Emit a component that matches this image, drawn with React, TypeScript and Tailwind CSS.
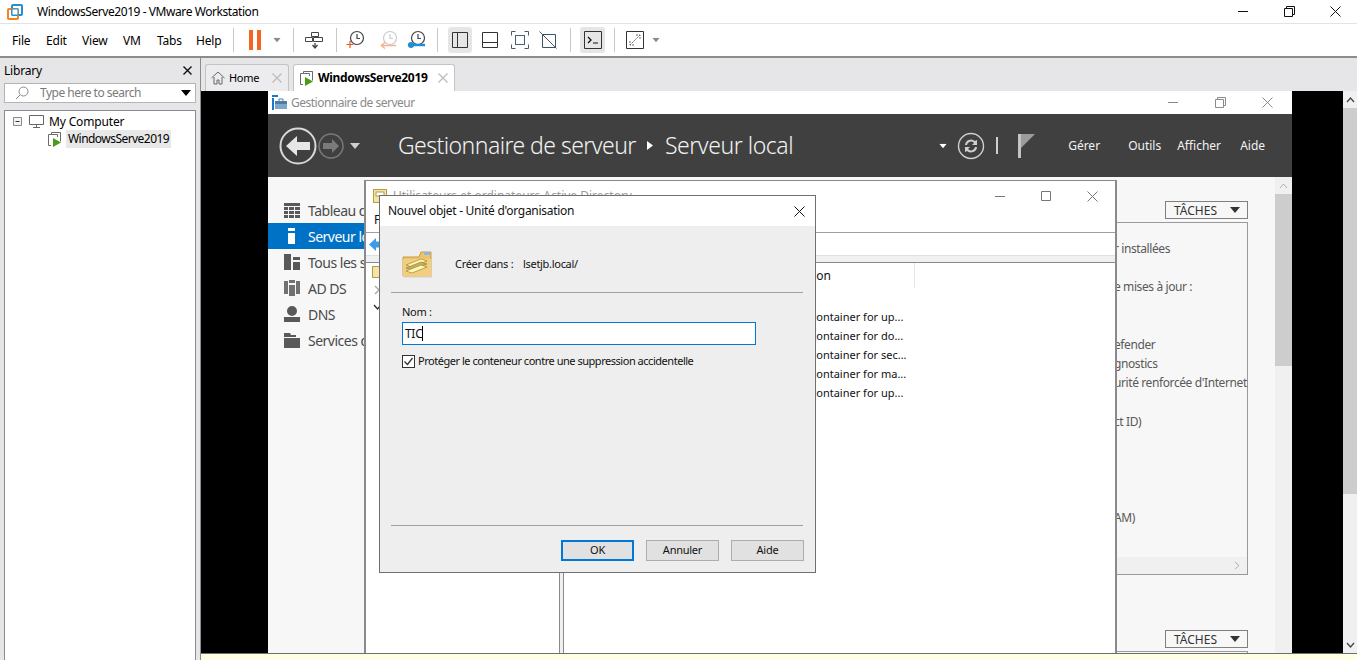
import React from "react";

const MENUS: [string, string][] = [
  ["File", "w-[34px]"],
  ["Edit", "w-[36px]"],
  ["View", "w-[41px]"],
  ["VM", "w-[34px]"],
  ["Tabs", "w-[39px]"],
  ["Help", "w-[37px]"],
];

const NAV = ["Tableau de bord", "Serveur local", "Tous les serveurs", "AD DS", "DNS", "Services de fichiers"];

const SIDE_ROWS: [number, string][] = [
  [0, "r installées"],
  [2, "e mises à jour :"],
  [5, "efender"],
  [6, "gnostics"],
  [7, "urité renforcée d'Internet"],
  [9, "ct ID)"],
  [14, "AM)"],
];

const CONTAINER_ROWS = ["container for up...", "container for do...", "container for sec...", "container for ma...", "container for up..."];

function Sep() {
  return <div className="w-px h-[24px] bg-[#c8c8c8]" />;
}

function Caret({ className }: { className: string }) {
  return (
    <svg width="10" height="6" viewBox="0 0 10 6" className={className}>
      <path d="M0 0h10L5 6z" fill="currentColor" />
    </svg>
  );
}

function VmwareLogo() {
  return (
    <svg width="16" height="16" viewBox="0 0 16 16">
      <rect x="5" y="1" width="10" height="10" rx="1" fill="none" stroke="#1f8fd6" strokeWidth="2" />
      <rect x="1" y="5" width="10" height="10" rx="1" fill="none" stroke="#f58220" strokeWidth="2" />
      <rect x="5" y="5" width="6" height="6" fill="#fff" stroke="#1f8fd6" strokeWidth="1" />
    </svg>
  );
}

function VmRunningIcon() {
  return (
    <svg width="15" height="15" viewBox="0 0 15 15" className="shrink-0">
      <path d="M3.500 2.500V.5h9v2M.5 2.500h9v11h-9z" fill="none" stroke="#6b6b6b" />
      <path d="M12.500 .5v9" stroke="#6b6b6b" />
      <rect x="3" y="5" width="7" height="9" fill="#fff" />
      <path d="M5 6l8 4.500L5 15z" fill="#4c9a17" />
    </svg>
  );
}

function ClockIcon({ color = "#444", children }: { color?: string; children?: React.ReactNode }) {
  return (
    <svg width="20" height="20" viewBox="0 0 20 20">
      <circle cx="11" cy="8" r="6.500" fill="none" stroke={color} strokeWidth="1.2" />
      <path d="M11 4v4.500h3" fill="none" stroke={color} strokeWidth="1.2" />
      {children}
    </svg>
  );
}

function FolderIcon() {
  return (
    <svg width="30" height="28" viewBox="0 0 30 28" className="shrink-0">
      <path d="M1 7h16l2-5h10v24H1z" fill="#eec36a" stroke="#c79c45" />
      <path d="M1 9h28v17H1z" fill="#f2cf7f" />
      <rect x="22" y="2" width="6" height="3" fill="#8fb4e8" />
      <path d="M4 15l15-6 6 2-15 6z" fill="#fdf6bd" stroke="#9d8430" strokeWidth=".7" />
      <path d="M4 18l15-6 6 2-15 6z" fill="#c9b24e" stroke="#9d8430" strokeWidth=".7" />
      <path d="M4 21l15-6 6 2-15 6z" fill="#fdf6bd" stroke="#9d8430" strokeWidth=".7" />
      <path d="M2 27h28V9" fill="none" stroke="#d8d2c0" />
    </svg>
  );
}

function NavIcon({ index, active }: { index: number; active: boolean }) {
  const c = active ? "#fff" : "#595959";
  const icons = [
    <path key="0" d="M0 1h16v3H0zM0 5h4v3H0zM5 5h5v3H5zM11 5h5v3h-5zM0 9h4v3H0zM5 9h5v3H5zM11 9h5v3h-5zM0 13h4v3H0zM5 13h5v3H5zM11 13h5v3h-5z" fill={c} />,
    <path key="1" d="M4 0h7v3H4zM4 5h7v11H4z" fill={c} />,
    <path key="2" d="M0 0h7v16H0zM9 3h7v3H9zM9 8h7v8H9z" fill={c} />,
    <path key="3" d="M0 1h4v13H0zM12 1h4v13h-4zM5 0h6v3H5zM5 5h6v11H5z" fill={c} opacity=".85" />,
    <path key="4" d="M8 0a5 5 0 110 10A5 5 0 018 0zM0 11h16v5H0z" fill={c} />,
    <path key="5" d="M0 1h6l1 2h5v2H0zM0 6h16v10H0z" fill={c} />,
  ];
  return (
    <svg width="16" height="16" viewBox="0 0 16 16" className="shrink-0">
      {icons[index]}
    </svg>
  );
}

function WinControls({ color, restore }: { color: string; restore: boolean }) {
  return (
    <>
      <svg width="11" height="11" viewBox="0 0 11 11">
        <path d="M0 5.500h10" stroke={color} />
      </svg>
      <svg width="11" height="11" viewBox="0 0 11 11">
        {restore ? (
          <path d="M.5 2.500h8v8h-8zM2.500 2.500v-2h8v8h-2" fill="none" stroke={color} />
        ) : (
          <path d="M.5.5h9v9h-9z" fill="none" stroke={color} />
        )}
      </svg>
      <svg width="11" height="11" viewBox="0 0 11 11">
        <path d="M.5.5l10 10M10.500.5l-10 10" stroke={color} />
      </svg>
    </>
  );
}

function TachesButton() {
  return (
    <div className="w-[83px] h-[18px] border border-[#7f7f7f] flex items-center pl-[8px] pr-[7px] justify-between text-[12px] text-[#333] bg-[#f7f7f7]">
      <span className="pt-[1px]">TÂCHES</span>
      <Caret className="text-[#333]" />
    </div>
  );
}

function DialogButton({ label, primary }: { label: string; primary?: boolean }) {
  return (
    <div
      className={
        primary
          ? "w-[73px] h-[21px] bg-[#e1e1e1] border-2 border-[#0078d7] flex items-center justify-center text-[11px] tracking-[-0.25px] text-[#111]"
          : "w-[73px] h-[21px] bg-[#e1e1e1] border border-[#adadad] flex items-center justify-center text-[11px] tracking-[-0.25px] text-[#111]"
      }
    >
      {label}
    </div>
  );
}

function NewObjectDialog() {
  return (
    <div className="absolute left-[178px] top-[104px] w-[437px] h-[378px] border border-[#6f6f6f] bg-[#eeeeee] flex flex-col text-[#111]">
      <div className="h-[30px] bg-white flex items-center justify-between pl-[8px] pr-[10px] shrink-0">
        <span className="text-[12px] tracking-[-0.28px]">Nouvel objet - Unité d'organisation</span>
        <svg width="11" height="11" viewBox="0 0 11 11">
          <path d="M.5.5l10 10M10.500.5l-10 10" stroke="#111" />
        </svg>
      </div>
      <div className="flex items-center h-[66px] shrink-0 pl-[22px] pt-[10px] text-[11px] tracking-[-0.3px]">
        <FolderIcon />
        <span className="ml-[23px] w-[68px]">Créer dans :</span>
        <span>lsetjb.local/</span>
      </div>
      <div className="ml-[11px] mr-[12px] h-px bg-[#a0a0a0] shrink-0" />
      <div className="pl-[22px] pt-[11px] text-[11px] tracking-[-0.3px] leading-[16px] shrink-0">Nom :</div>
      <div className="ml-[22px] mt-[2px] w-[354px] h-[23px] bg-white border border-[#0078d7] flex items-center pl-[2px] text-[12px] shrink-0">
        <span className="tracking-[-0.3px]">TIC</span>
        <span className="w-px h-[15px] bg-black" />
      </div>
      <div className="ml-[22px] mt-[8px] flex items-center gap-[3px] shrink-0">
        <svg width="13" height="13" viewBox="0 0 13 13">
          <rect x=".5" y=".5" width="12" height="12" fill="#fff" stroke="#333" />
          <path d="M2.500 6.500l3 3 5-6.500" fill="none" stroke="#333" strokeWidth="1.3" />
        </svg>
        <span className="text-[11px] tracking-[-0.47px]">Protéger le conteneur contre une suppression accidentelle</span>
      </div>
      <div className="mt-auto ml-[11px] mr-[12px] h-px bg-[#a0a0a0] shrink-0" />
      <div className="flex justify-end gap-[12px] pr-[11px] pt-[14px] pb-[11px] shrink-0">
        <DialogButton label="OK" primary />
        <DialogButton label="Annuler" />
        <DialogButton label="Aide" />
      </div>
    </div>
  );
}

function AdWindow() {
  return (
    <div className="absolute left-[163px] top-[89px] bottom-0 w-[753px] border-x-2 border-t border-[#8a8a8e] bg-white flex flex-col">
      <div className="h-[30px] shrink-0 flex items-center pl-[7px] pr-[17px] text-[12px] text-[#9a9a9a]">
        <svg width="14" height="14" viewBox="0 0 14 14" className="shrink-0">
          <rect x=".5" y=".5" width="13" height="13" fill="#f3e6a5" stroke="#b89b45" />
          <rect x="3" y="3" width="8" height="4" fill="#fff" stroke="#b89b45" />
        </svg>
        <span className="ml-[6px]">Utilisateurs et ordinateurs Active Directory</span>
        <div className="ml-auto flex gap-[35px] items-center">
          <WinControls color="#777" restore={false} />
        </div>
      </div>
      <div className="h-[22px] shrink-0 pl-[8px] text-[12px] text-[#111] border-b border-[#a0a0a0]">F</div>
      <div className="h-[23px] shrink-0 flex items-center pl-[3px] border-b border-[#e0e0e0]">
        <svg width="11" height="13" viewBox="0 0 11 13">
          <path d="M0 6.500L7 0v3.500h4v6H7V13z" fill="#3f9be8" />
        </svg>
      </div>
      <div className="h-[6px] shrink-0 bg-[#f0f0f0]" />
      <div className="flex-1 flex border-t border-[#8a8a8e] min-h-0">
        <div className="w-[194px] shrink-0 border-r border-[#8a8a8e] pl-[6px] pt-[3px]">
          <svg width="14" height="12" viewBox="0 0 14 12">
            <rect x=".5" y=".5" width="13" height="11" fill="#f3e6a5" stroke="#b89b45" />
          </svg>
          <div className="mt-[7px] flex flex-col gap-[7px] pl-[1px]">
            <svg width="9" height="10" viewBox="0 0 9 10">
              <path d="M2 1l4 4-4 4" fill="none" stroke="#a8a8a8" strokeWidth="1.4" />
            </svg>
            <svg width="9" height="10" viewBox="0 0 9 10">
              <path d="M1 3l3.500 4L8 3" fill="none" stroke="#333" strokeWidth="1.4" />
            </svg>
          </div>
        </div>
        <div className="w-[3px] shrink-0 bg-[#f0f0f0]" />
        <div className="flex-1 border-l border-[#8a8a8e] min-w-0 flex flex-col text-[11px] text-[#111]">
          <div className="h-[25px] w-[351px] shrink-0 border-r border-[#e4e4e4] flex items-center justify-end pr-[83px] text-[12px]">
            <span>ion</span>
          </div>
          <div className="pt-[19px] pl-[247px] flex flex-col">
            {CONTAINER_ROWS.map((row, i) => (
              <div key={i} className="h-[19px] leading-[19px] whitespace-nowrap">
                {row}
              </div>
            ))}
          </div>
        </div>
      </div>
    </div>
  );
}

function ServerManager() {
  return (
    <div className="absolute left-[67px] top-0 bottom-0 w-[1024px] flex flex-col bg-[#f7f7f7]">
      <div className="h-[23px] bg-white flex items-center shrink-0 pl-[3px] pr-[19px] text-[12px] text-[#8a8a8a]">
        <svg width="17" height="15" viewBox="0 0 17 15">
          <path d="M1 0h6v2H1zM1 3h2v12H1z" fill="#1b78c8" />
          <path d="M4 9h12v5H4z" fill="#7fa6c4" />
          <path d="M4 6h12v3H4z" fill="#4a7ea6" />
          <path d="M8 6V4h4v2" fill="none" stroke="#4a7ea6" />
        </svg>
        <span className="ml-[3px] tracking-[-0.5px]">Gestionnaire de serveur</span>
        <div className="ml-auto flex gap-[36px] items-center">
          <WinControls color="#8a8a8a" restore />
        </div>
      </div>
      <div className="h-[63px] bg-[#404040] flex items-center shrink-0 pl-[11px] text-white">
        <svg width="38" height="38" viewBox="0 0 38 38">
          <circle cx="19" cy="19" r="17.500" fill="none" stroke="#d8d8d8" strokeWidth="2" />
          <path d="M7 19l11-10v6h13v8H18v6z" fill="#e6e6e6" />
        </svg>
        <svg width="26" height="26" viewBox="0 0 26 26" className="ml-[1px]">
          <circle cx="13" cy="13" r="12" fill="none" stroke="#7a7a7a" strokeWidth="1.5" />
          <path d="M21 13l-7-7v4H5v6h9v4z" fill="#7a7a7a" />
        </svg>
        <Caret className="ml-[6px] text-[#cfcfcf]" />
        <span className="ml-[38px] text-[23px] font-light tracking-[-0.55px] text-[#f2f2f2]">Gestionnaire de serveur</span>
        <svg width="6" height="9" viewBox="0 0 6 9" className="ml-[11px]">
          <path d="M0 0l6 4.500L0 9z" fill="#fff" />
        </svg>
        <span className="ml-[12px] text-[23px] font-light tracking-[-0.45px] text-[#f2f2f2]">Serveur local</span>
        <div className="ml-[145px] flex items-center">
          <Caret className="text-white scale-75" />
          <svg width="28" height="28" viewBox="0 0 28 28" className="ml-[9px]">
            <circle cx="14" cy="14" r="12.500" fill="none" stroke="#cfcfcf" strokeWidth="1.4" />
            <path d="M8 13a6 6 0 0110-4l2-1v5h-5l2-2a4 4 0 00-7 2zM20 15a6 6 0 01-10 4l-2 1v-5h5l-2 2a4 4 0 007-2z" fill="#cfcfcf" />
          </svg>
          <div className="ml-[11px] w-[2px] h-[17px] bg-[#cfcfcf]" />
          <svg width="18" height="24" viewBox="0 0 18 24" className="ml-[20px]">
            <path d="M0 0h3v24H0z" fill="#c4c4c4" />
            <path d="M3 0h14L3 14z" fill="#9c9c9c" />
          </svg>
        </div>
        <div className="flex items-center text-[12px] text-[#f2f2f2] ml-[32px]">
          <span className="w-[60px]">Gérer</span>
          <span className="w-[49px]">Outils</span>
          <span className="w-[63px]">Afficher</span>
          <span>Aide</span>
        </div>
      </div>
      <div className="flex-1 flex min-h-0">
        <div className="w-[96px] shrink-0 pt-[20px]">
          {NAV.map((item, i) => (
            <div
              key={item}
              className={
                i === 1
                  ? "h-[26px] flex items-center pl-[16px] gap-[8px] text-[14px] tracking-[-0.5px] whitespace-nowrap bg-[#0072c6] text-white"
                  : "h-[26px] flex items-center pl-[16px] gap-[8px] text-[14px] tracking-[-0.5px] whitespace-nowrap text-[#4a4a4a]"
              }
            >
              <NavIcon index={i} active={i === 1} />
              <span>{item}</span>
            </div>
          ))}
        </div>
        <div className="flex-1 min-w-0 flex flex-col items-end pr-[27px] pt-[24px]">
          <TachesButton />
          <div className="w-[400px] h-[353px] mt-[3px] border-r border-b border-t border-[#9a9a9a] flex flex-col justify-between">
            <div className="pl-[266px] pt-[16px] text-[12px] text-[#595959] whitespace-nowrap tracking-[-0.4px]">
              {Array.from({ length: 15 }).map((_, i) => {
                const row = SIDE_ROWS.find((r) => r[0] === i);
                return (
                  <div key={i} className="h-[19.2px] leading-[19px]">
                    {row ? row[1] : ""}
                  </div>
                );
              })}
            </div>
            <div className="h-[17px] bg-[#f0f0f0] flex items-center justify-end pr-[7px]">
              <svg width="6" height="9" viewBox="0 0 6 9">
                <path d="M1 1l4 3.500L1 8" fill="none" stroke="#b0b0b0" />
              </svg>
            </div>
          </div>
          <div className="mt-[55px]">
            <TachesButton />
          </div>
          <div className="w-[400px] flex-1 mt-[3px] border-r border-t border-[#9a9a9a]" />
        </div>
        <div className="w-[17px] shrink-0 bg-[#f0f0f0] flex flex-col">
          <div className="h-[17px] flex items-center justify-center">
            <svg width="9" height="6" viewBox="0 0 9 6">
              <path d="M1 5l3.500-4L8 5" fill="none" stroke="#b0b0b0" />
            </svg>
          </div>
          <div className="h-[172px] bg-[#cdcdcd]" />
        </div>
      </div>
    </div>
  );
}

export default function App() {
  return (
    <div
      className="w-[1357px] h-[660px] overflow-hidden flex flex-col bg-white text-[12px] text-black"
      style={{ fontFamily: '"Noto Sans", "Liberation Sans", sans-serif' }}
    >
      {/* host title bar */}
      <div className="h-[24px] shrink-0 flex items-center pl-[7px] border-b border-[#e3e3e3]">
        <VmwareLogo />
        <span className="ml-[14px] tracking-[-0.43px]">WindowsServe2019 - VMware Workstation</span>
        <div className="ml-auto flex items-center gap-[35px] pr-[16px]">
          <WinControls color="#111" restore />
        </div>
      </div>

      {/* host toolbar */}
      <div className="h-[34px] shrink-0 flex items-center pl-[12px] border-b-2 border-[#8c8c8c]">
        {MENUS.map(([name, width]) => (
          <span key={name} className={`${width} pt-[2px] tracking-[-0.2px]`}>
            {name}
          </span>
        ))}
        <Sep />
        <div className="ml-[15px] flex gap-[4px]">
          <div className="w-[4px] h-[20px] bg-[#f26522]" />
          <div className="w-[4px] h-[20px] bg-[#f26522]" />
        </div>
        <Caret className="ml-[11px] text-[#8a8a8a] scale-75" />
        <div className="ml-[11px]">
          <Sep />
        </div>
        <svg width="20" height="20" viewBox="0 0 20 20" className="ml-[11px]">
          <path d="M6.500 2.500h7v4h-7zM.5 7.500h7v4h-7zM8.500 7.500h9v4h-9z" fill="none" stroke="#444" />
          <path d="M10 13v4M7.500 15l2.500 3 2.500-3" fill="none" stroke="#444" strokeWidth="1.3" />
        </svg>
        <div className="ml-[11px]">
          <Sep />
        </div>
        <div className="ml-[9px]">
          <ClockIcon>
            <path d="M4 11v7M.5 14.500h7" stroke="#e8581c" strokeWidth="1.2" />
          </ClockIcon>
        </div>
        <div className="ml-[13px] opacity-50">
          <ClockIcon color="#999">
            <path d="M2 15.500h15M2 15.500l4-3M2 15.500l4 3" stroke="#f26522" strokeWidth="1.5" fill="none" />
          </ClockIcon>
        </div>
        <div className="ml-[8px]">
          <ClockIcon>
            <path d="M1 15h17" stroke="#1c8fd6" strokeWidth="2.4" />
            <circle cx="4" cy="15" r="3" fill="#1c8fd6" />
          </ClockIcon>
        </div>
        <div className="ml-[10px]">
          <Sep />
        </div>
        <div className="ml-[10px] w-[24px] h-[26px] rounded-[3px] bg-[#e6e6e6] flex items-center justify-center">
          <svg width="16" height="16" viewBox="0 0 16 16">
            <path d="M.5.5h15v15H.5zM5.500.5v15" fill="none" stroke="#333" />
          </svg>
        </div>
        <svg width="16" height="16" viewBox="0 0 16 16" className="ml-[10px]">
          <path d="M.5.5h15v15H.5zM.5 10.500h15" fill="none" stroke="#333" />
        </svg>
        <svg width="18" height="18" viewBox="0 0 18 18" className="ml-[13px]">
          <path d="M.5 4.500v-4h4M13.500.5h4v4M17.500 13.500v4h-4M4.500 17.500h-4v-4" fill="none" stroke="#555" />
          <rect x="4.500" y="4.500" width="9" height="9" fill="none" stroke="#46606e" />
        </svg>
        <svg width="18" height="18" viewBox="0 0 18 18" className="ml-[10px]">
          <path d="M3.500 3.500h13v13h-13z" fill="none" stroke="#3b5666" />
          <path d="M.5.5l17 17" stroke="#555" />
        </svg>
        <div className="ml-[13px]">
          <Sep />
        </div>
        <div className="ml-[9px] w-[25px] h-[26px] rounded-[3px] bg-[#e6e6e6] flex items-center justify-center">
          <svg width="18" height="18" viewBox="0 0 18 18">
            <path d="M.5.500h17v17H.5z" fill="none" stroke="#333" />
            <path d="M4 6l3 3-3 3" fill="none" stroke="#111" strokeWidth="1.3" />
            <path d="M9 12h5" stroke="#111" />
          </svg>
        </div>
        <div className="ml-[9px]">
          <Sep />
        </div>
        <svg width="18" height="18" viewBox="0 0 18 18" className="ml-[11px]">
          <path d="M.5.500h17v17H.5z" fill="none" stroke="#333" />
          <path d="M4 14L14 4M10 4h4v4M4 10v4h4" fill="none" stroke="#666" strokeDasharray="2 1" />
        </svg>
        <Caret className="ml-[7px] text-[#8a8a8a] scale-75" />
      </div>

      <div className="flex-1 flex min-h-0">
        {/* library */}
        <div className="w-[200px] shrink-0 bg-[#e6e6e8] flex flex-col">
          <div className="h-[25px] shrink-0 flex items-center justify-between pl-[4px] pr-[8px]">
            <span className="tracking-[-0.2px]">Library</span>
            <svg width="9" height="9" viewBox="0 0 9 9">
              <path d="M.5.5l8 8M8.500.5l-8 8" stroke="#111" strokeWidth="1.4" />
            </svg>
          </div>
          <div className="mx-[4px] h-[20px] shrink-0 bg-white border border-[#b4b4b4] flex items-center pl-[10px] pr-[4px] text-[#7a7a7a]">
            <svg width="14" height="14" viewBox="0 0 14 14">
              <circle cx="8.500" cy="5.500" r="4.500" fill="none" stroke="#8a8a8a" />
              <path d="M5 9l-4 4" stroke="#8a8a8a" />
            </svg>
            <span className="ml-[11px] tracking-[-0.5px]">Type here to search</span>
            <Caret className="ml-auto text-black" />
          </div>
          <div className="mx-[4px] mt-[7px] flex-1 bg-white border border-[#8a8a90] border-b-0 pt-[2px]">
            <div className="h-[17px] flex items-center pl-[8px]">
              <svg width="10" height="10" viewBox="0 0 10 10">
                <path d="M.5.500h8v8h-8z" fill="#f4f4f4" stroke="#8a8a8a" />
                <path d="M2.500 4.500h4" stroke="#333" />
              </svg>
              <svg width="15" height="13" viewBox="0 0 15 13" className="ml-[6px]">
                <path d="M.5.500h14v9H.5z" fill="none" stroke="#666" />
                <path d="M4 12.500h7M7.500 9.500v3" stroke="#666" />
              </svg>
              <span className="ml-[5px] tracking-[-0.15px]">My Computer</span>
            </div>
            <div className="h-[18px] flex items-center pl-[43px]">
              <VmRunningIcon />
              <span className="ml-[3px] px-[2px] h-[18px] leading-[18px] bg-[#e8e8e8] tracking-[-0.55px]">WindowsServe2019</span>
            </div>
          </div>
        </div>

        {/* workspace */}
        <div className="flex-1 min-w-0 flex flex-col border-l border-[#8c8c8c] bg-[#e6e6e8]">
          <div className="h-[33px] shrink-0 flex items-end pl-[4px] gap-[4px]">
            <div className="w-[84px] h-[27px] bg-[#ececee] border border-b-0 border-[#c4c4c4] rounded-t-[3px] flex items-center pl-[5px] pr-[6px]">
              <svg width="14" height="14" viewBox="0 0 14 14">
                <path d="M.5 7L7 1l6.500 6M3 6v7h3V9h2v4h3V6" fill="none" stroke="#666" />
              </svg>
              <span className="ml-[4px] text-[11px] tracking-[-0.3px]">Home</span>
              <svg width="10" height="10" viewBox="0 0 10 10" className="ml-auto">
                <path d="M.5.500l9 9M9.500.500l-9 9" stroke="#bdbdbd" strokeWidth="1.4" />
              </svg>
            </div>
            <div className="w-[162px] h-[27px] bg-white border border-b-0 border-[#c4c4c4] rounded-t-[3px] flex items-center pl-[6px] pr-[6px]">
              <VmRunningIcon />
              <span className="ml-[3px] font-bold tracking-[-0.33px]">WindowsServe2019</span>
              <svg width="10" height="10" viewBox="0 0 10 10" className="ml-auto">
                <path d="M.5.500l9 9M9.500.500l-9 9" stroke="#bdbdbd" strokeWidth="1.4" />
              </svg>
            </div>
          </div>
          <div className="flex-1 flex min-h-0">
            <div className="relative flex-1 min-w-0 bg-black">
              <ServerManager />
              <AdWindow />
              <NewObjectDialog />
            </div>
            <div className="w-[14px] shrink-0 bg-[#f0f0f0] flex flex-col">
              <div className="h-[17px] flex items-center justify-center">
                <svg width="9" height="6" viewBox="0 0 9 6">
                  <path d="M1 5l3.500-4L8 5" fill="none" stroke="#444" strokeWidth="1.3" />
                </svg>
              </div>
              <div className="h-[386px] bg-[#cdcdcd]" />
              <div className="h-[17px] mt-auto flex items-center justify-center">
                <svg width="9" height="6" viewBox="0 0 9 6">
                  <path d="M1 1l3.500 4L8 1" fill="none" stroke="#444" strokeWidth="1.3" />
                </svg>
              </div>
            </div>
          </div>
          <div className="h-[7px] shrink-0 bg-[#ffffe5] border-t border-[#6e6e6e]" />
        </div>
      </div>
    </div>
  );
}
